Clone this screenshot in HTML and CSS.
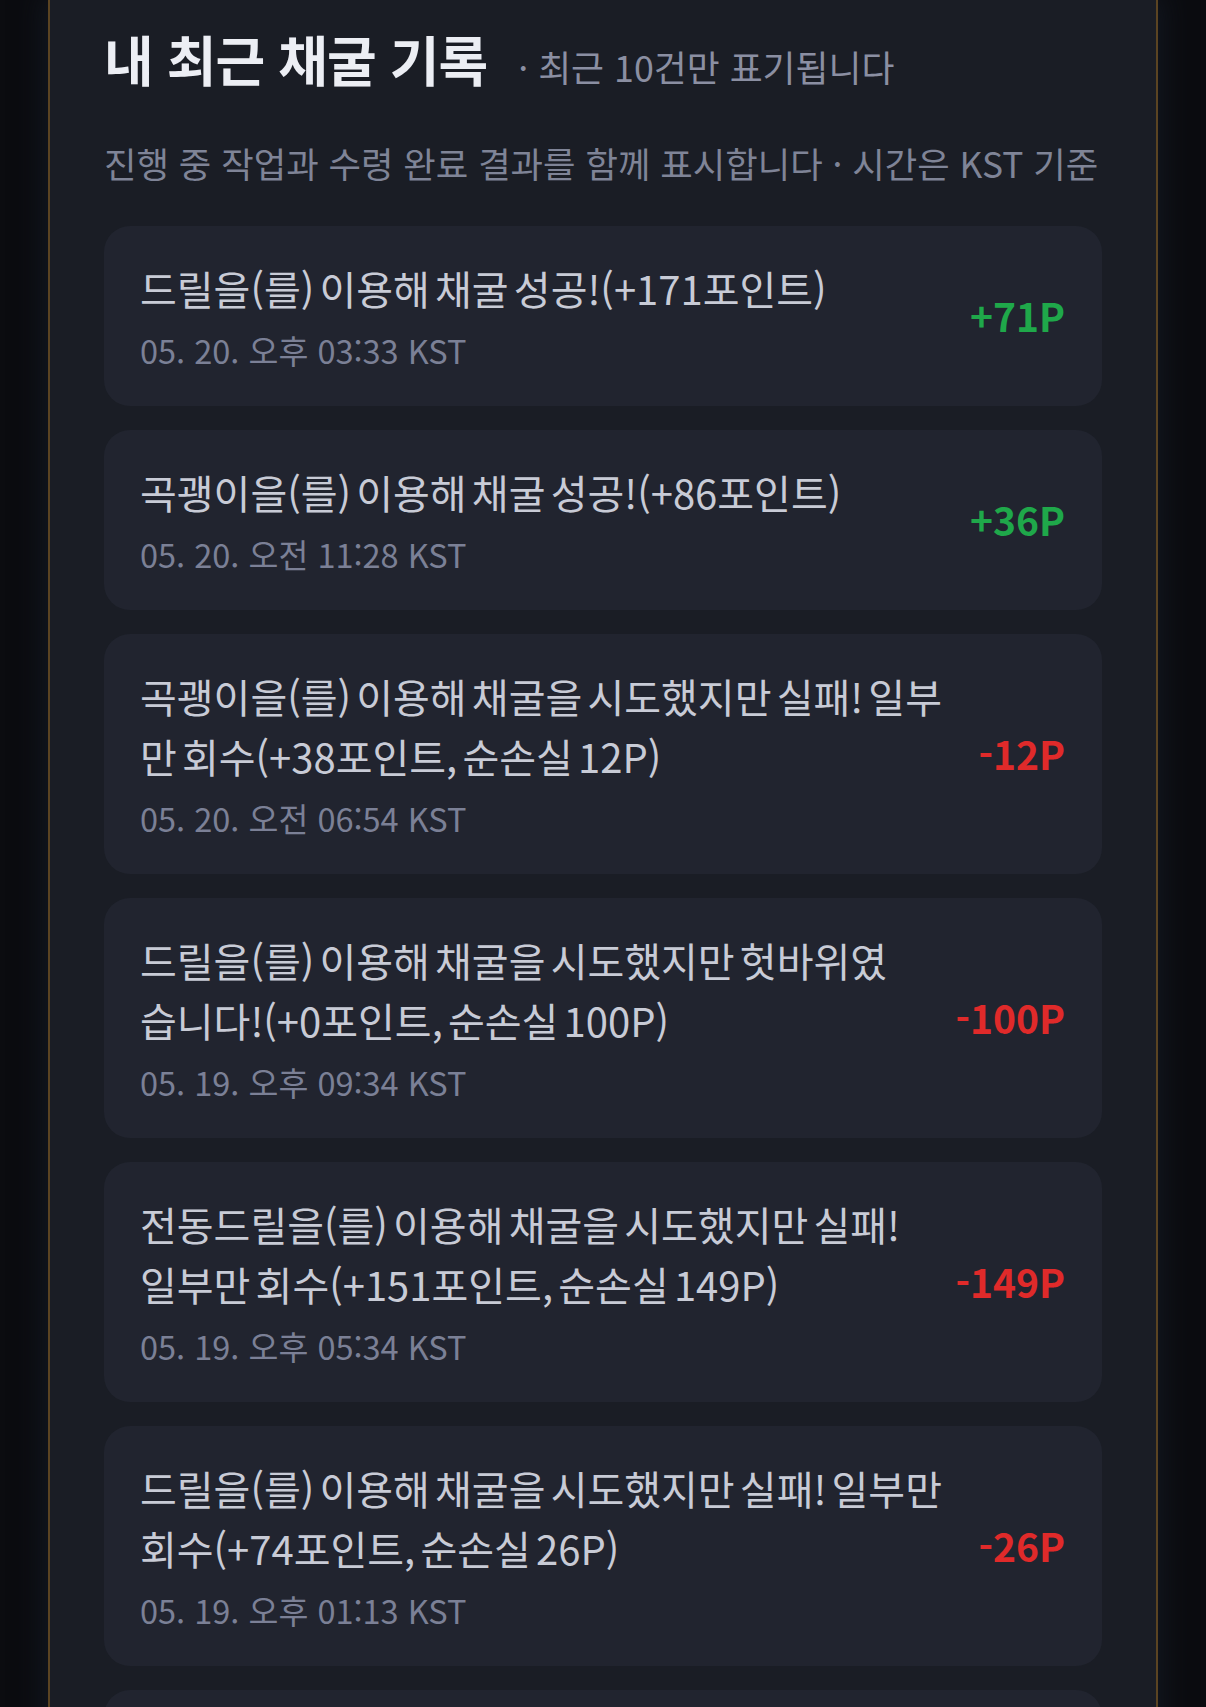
FILE: index.html
```html
<!DOCTYPE html>
<html lang="ko">

<head>
    <meta charset="UTF-8">
    <meta name="viewport" content="width=device-width, initial-scale=1.0">
    <title>내 최근 채굴 기록</title>
    <link rel="stylesheet" href="styles.css">
</head>

<body>
    <div class="panel">
        <div class="history-header">
            <h2>내 최근 채굴 기록</h2>
            <span class="limit-note">· 최근 10건만 표기됩니다</span>
        </div>
        <p class="history-desc">진행 중 작업과 수령 완료 결과를 함께 표시합니다 · 시간은 KST 기준</p>

        <ul class="history-list">
            <li class="history-item">
                <div class="item-body">
                    <div class="item-title">드릴을(를) 이용해 채굴 성공!(+171포인트)</div>
                    <div class="item-time">05. 20. 오후 03:33 KST</div>
                </div>
                <div class="item-value plus">+71P</div>
            </li>
            <li class="history-item">
                <div class="item-body">
                    <div class="item-title">곡괭이을(를) 이용해 채굴 성공!(+86포인트)</div>
                    <div class="item-time">05. 20. 오전 11:28 KST</div>
                </div>
                <div class="item-value plus">+36P</div>
            </li>
            <li class="history-item">
                <div class="item-body">
                    <div class="item-title">곡괭이을(를) 이용해 채굴을 시도했지만 실패! 일부만 회수(+38포인트, 순손실 12P)</div>
                    <div class="item-time">05. 20. 오전 06:54 KST</div>
                </div>
                <div class="item-value minus">-12P</div>
            </li>
            <li class="history-item">
                <div class="item-body">
                    <div class="item-title">드릴을(를) 이용해 채굴을 시도했지만 헛바위였습니다!(+0포인트, 순손실 100P)</div>
                    <div class="item-time">05. 19. 오후 09:34 KST</div>
                </div>
                <div class="item-value minus">-100P</div>
            </li>
            <li class="history-item">
                <div class="item-body">
                    <div class="item-title">전동드릴을(를) 이용해 채굴을 시도했지만 실패! 일부만 회수(+151포인트, 순손실 149P)</div>
                    <div class="item-time">05. 19. 오후 05:34 KST</div>
                </div>
                <div class="item-value minus">-149P</div>
            </li>
            <li class="history-item">
                <div class="item-body">
                    <div class="item-title">드릴을(를) 이용해 채굴을 시도했지만 실패! 일부만 회수(+74포인트, 순손실 26P)</div>
                    <div class="item-time">05. 19. 오후 01:13 KST</div>
                </div>
                <div class="item-value minus">-26P</div>
            </li>
            <li class="history-item">
                <div class="item-body">
                    <div class="item-title">곡괭이을(를) 이용해 채굴 성공!(+92포인트)</div>
                    <div class="item-time">05. 19. 오전 08:41 KST</div>
                </div>
                <div class="item-value plus">+42P</div>
            </li>
        </ul>
    </div>
</body>

</html>
```

FILE: styles.css
```css
body {
    font-family: "Noto Sans CJK KR", "Noto Sans", sans-serif;
    background-color: #0b0c10;
    margin: 0;
    padding: 0;
}

.panel {
    margin: 0 48px;
    padding: 22px 54px 40px 54px;
    background-color: #1a1d25;
    border-left: 2px solid #5b4422;
    border-right: 2px solid #5b4422;
    box-shadow: 0 0 26px 4px rgba(20, 25, 36, 0.9);
}

.history-header {
    display: flex;
    align-items: baseline;
    gap: 31px;
}

.history-header h2 {
    margin: 0;
    font-size: 54px;
    line-height: 73px;
    font-weight: 700;
    letter-spacing: -1px;
    color: #eceef4;
}

.limit-note {
    font-size: 35.8px;
    color: #8b8fa2;
}

.history-desc {
    margin: 42px 0 0 0;
    font-size: 35.3px;
    line-height: 51px;
    color: #7f8497;
}

.history-list {
    list-style: none;
    margin: 38px 0 0 0;
    padding: 0;
    display: flex;
    flex-direction: column;
    gap: 24px;
}

.history-item {
    display: flex;
    align-items: center;
    gap: 34.5px;
    padding: 32px 37px 34px 36px;
    background-color: #21242f;
    border-radius: 26px;
}

.item-body {
    flex: 1;
    min-width: 0;
}

.item-title {
    font-size: 40px;
    line-height: 60px;
    word-spacing: -6px;
    color: #c8cbd6;
}

.item-time {
    margin-top: 10px;
    font-size: 32.5px;
    line-height: 44px;
    color: #7b8096;
}

.item-value {
    flex-shrink: 0;
    white-space: nowrap;
    font-size: 39px;
    font-weight: 700;
}

.item-value.plus {
    color: #1fa84a;
}

.item-value.minus {
    color: #e02a2a;
}
```
